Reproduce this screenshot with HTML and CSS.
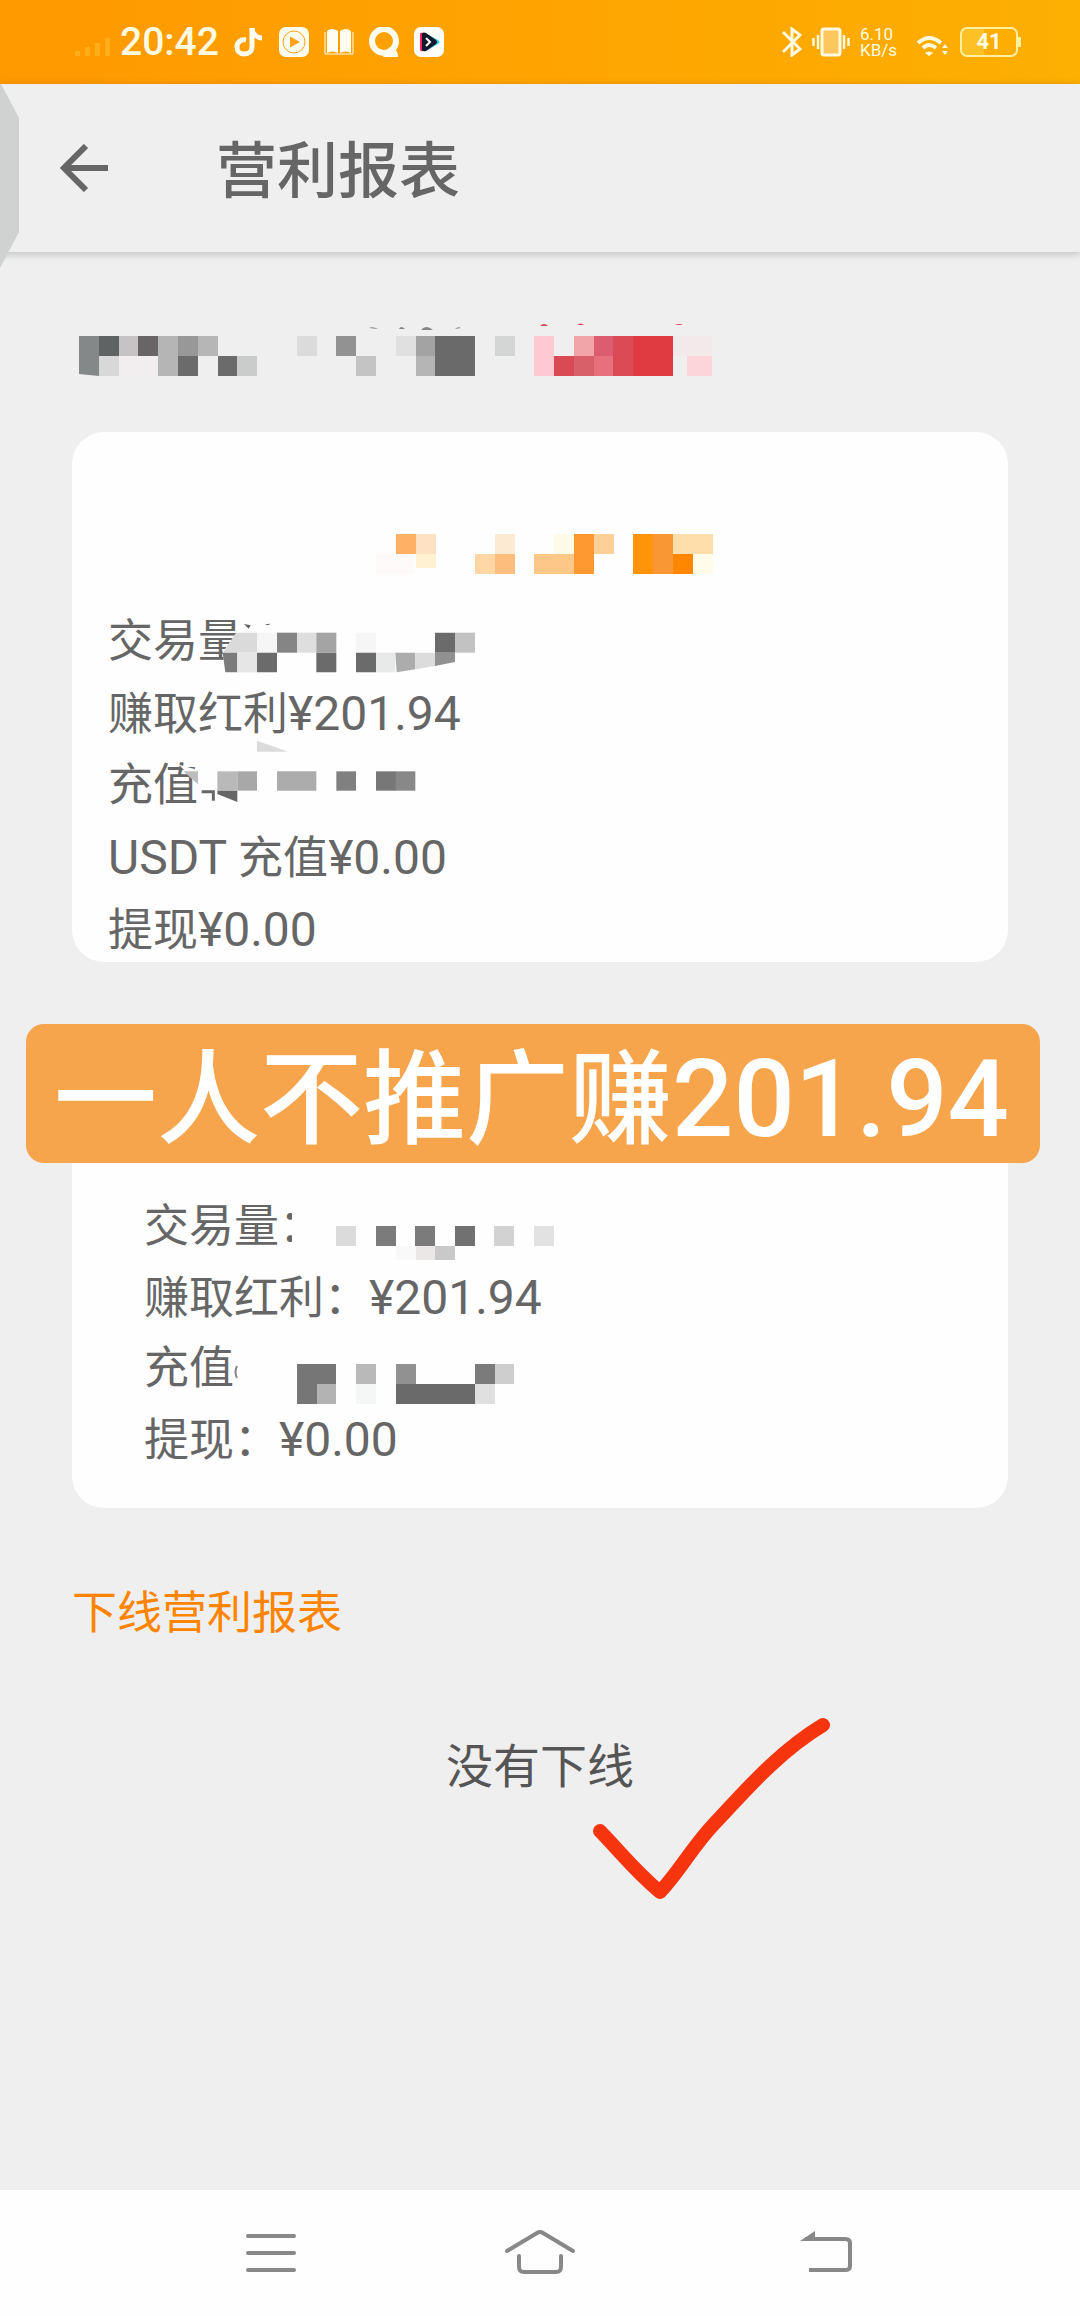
FILE: index.html
```html
<!DOCTYPE html>
<html lang="zh-CN">
<head>
  <meta charset="UTF-8">
  <meta name="viewport" content="width=device-width, initial-scale=1">
  <title>营利报表</title>
  <link rel="stylesheet" href="styles.css">
</head>
<body>

  <div class="status-bar">
    <div class="status-left">
      <svg class="signal" width="36" height="20" viewBox="0 0 36 20" fill="#ffad18">
        <rect x="0" y="13" width="5" height="5"/><rect x="10" y="9" width="5" height="9"/><rect x="20" y="5" width="5" height="13"/><rect x="30" y="0" width="5" height="18"/>
      </svg>
      <span class="time">20:42</span>
      <svg width="30" height="30" viewBox="0 0 30 30" fill="none" stroke="#fffdf0" stroke-width="5">
        <path d="M12 13C6 12 3 16 3 20C3 24 6 27 10 27C15 27 18 24 18 20V1"/><path d="M18 1C18 6 22 11 28 11"/>
      </svg>
      <svg width="30" height="30" viewBox="0 0 30 30">
        <rect width="30" height="30" rx="7" fill="#fffdf0"/><circle cx="15" cy="15" r="11" fill="none" stroke="#fda21c" stroke-width="1"/><path d="M11 9.500L21 15L11 20.500Z" fill="#fda21c"/>
      </svg>
      <svg width="30" height="30" viewBox="0 0 30 30" fill="#fffdf0">
        <path d="M3 4Q8 0 14 4V26Q8 23 3 26ZM16 4Q22 0 27 4V26Q22 23 16 26Z"/><path d="M1 5V27H29V5" fill="none" stroke="#fffdf0"/>
      </svg>
      <svg width="30" height="30" viewBox="0 0 30 30">
        <circle cx="15" cy="14" r="12" fill="none" stroke="#fffdf0" stroke-width="6"/><path d="M14 30C17 25 20 18 24 20C27 22 30 28 29 30Z" fill="#fffdf0"/>
      </svg>
      <svg width="30" height="30" viewBox="0 0 30 30">
        <rect width="30" height="30" rx="7" fill="#fffdf7"/><path d="M6 7Q6 5 9 6L14 9V22L9 24Q6 25 6 22Z" fill="#f5215f"/><path d="M11 6L24 13Q27 15 24 17L12 24Z" fill="#35d6dc"/><path d="M8 6Q10 5 12 6L22 13Q24 15 22 17L12 24Q9 25 8 23Z" fill="#15182c"/><path d="M12 11L16 15L12 19" fill="none" stroke="#fff" stroke-width="2"/>
      </svg>
    </div>
    <div class="status-right">
      <svg width="20" height="30" viewBox="0 0 20 30" fill="none" stroke="#fffbe0" stroke-width="3">
        <path d="M1 5L18 22L10 28V2L18 8L1 25"/>
      </svg>
      <svg width="38" height="30" viewBox="0 0 38 30">
        <rect x="10" y="2" width="18" height="26" rx="2" fill="#fdc75e" stroke="#fffbe0" stroke-width="3"/><path d="M6 8V22M1.500 11V19M32 8V22M36.500 11V19" stroke="#fffbe0" stroke-width="2.500"/>
      </svg>
      <div class="speed"><span>6.10</span><span>KB/s</span></div>
      <svg width="34" height="30" viewBox="0 0 34 30" fill="none" stroke="#fffbe0" stroke-width="4">
        <path d="M2 16Q13 6 25 16M7 21Q13 15 20 21"/><path d="M9 26Q13 23 17 26L13 29Z" fill="#fffbe0" stroke="none"/><path d="M26 21L29 17L32 21ZM26 24L29 28L32 24Z" fill="#fffbe0" stroke="none"/>
      </svg>
      <div class="battery">41</div>
    </div>
  </div>

  <header class="header">
    <svg class="edge" width="20" height="184" viewBox="0 0 20 184">
      <path d="M1 0L19 34V148L0 184V0Z" fill="#d0d1d1"/>
    </svg>
    <button class="back" aria-label="返回">
      <svg width="48" height="48" viewBox="0 0 48 48" fill="none" stroke="#666" stroke-width="6">
        <path d="M48 24H4M26 2L4 24L26 46"/>
      </svg>
    </button>
    <h1>营利报表</h1>
  </header>

  <main class="content">
    <svg class="account" width="520" height="60" viewBox="0 0 520 60">
      <path fill="#858888" d="M0 19H20V59L0 57Z"/>
      <path fill="#606363" d="M20 19h20v20h-20z"/><path fill="#c5c3c4" d="M40 19h20v20h-20z"/><path fill="#696465" d="M59 19h20v20h-20z"/>
      <path fill="#b6b5b6" d="M79 19h20v40h-20z"/><path fill="#989898" d="M99 19h20v20h-20z"/><path fill="#b6b6b6" d="M119 19h20v20h-20z"/>
      <path fill="#d9d8d9" d="M20 39h20v20h-20z"/><path fill="#f2eeef" d="M40 39h39v20h-39z"/><path fill="#6b6b6b" d="M99 39h20v20h-20zM139 39h20v20h-20z"/><path fill="#cacccc" d="M158 39h20v20h-20z"/>
      <path fill="#dadbda" d="M218 19h20v20h-20z"/><path fill="#929292" d="M257 19h20v20h-20z"/><path fill="#c4c4c4" d="M277 39h20v20h-20z"/>
      <path fill="#e0e0e0" d="M317 19h20v20h-20z"/><path fill="#a3a3a3" d="M337 19h20v20h-20z"/><path fill="#b5b5b5" d="M337 39h20v20h-20z"/><path fill="#6a6a6a" d="M356 19h40v40h-40z"/><path fill="#d4d6d5" d="M416 19h20v20h-20z"/>
      <path fill="#fec9d0" d="M455 19h20v40h-20z"/><path fill="#f1a5a8" d="M495 19h20v20h-20z"/><path fill="#d94a55" d="M475 39h20v20h-20z"/><path fill="#d86068" d="M495 39h20v20h-20z"/>
      <path fill="#dc5c70" d="M515 19h20v20h-20z"/><path fill="#e6707c" d="M515 39h20v20h-20z"/><path fill="#db4a55" d="M534 19h20v40h-20z"/><path fill="#e03b41" d="M554 19h40v40h-40z"/><path fill="#f2eaea" d="M594 19h39v20h-39z"/><path fill="#fbd5d9" d="M608 39h25v20h-25z"/>
      <path fill="#858585" d="M290 11q4-2 9 1zM320 12q2-4 6 0zM342 13q5-6 12 0zM376 12q3-3 6-1z"/>
      <path fill="#d8445d" d="M461 9q4-4 8 0zM498 8q4-3 7 0zM596 8q4-2 8 0z"/>
    </svg>

    <section class="card">
      <svg class="card-title" width="328" height="40" viewBox="0 0 328 40">
        <path fill="#fffafa" d="M0 20h38v20h-38z"/><path fill="#feb165" d="M20 0h20v20h-20z"/><path fill="#fee1c3" d="M40 0h20v20h-20z"/><path fill="#fff1d2" d="M40 20h20v14h-20z"/>
        <path fill="#fdead2" d="M119 0h20v20h-20z"/><path fill="#fed7a5" d="M99 20h20v20h-20z"/><path fill="#fdbd7c" d="M119 20h20v20h-20z"/>
        <path fill="#fffbe6" d="M178 0h20v20h-20z"/><path fill="#fdc887" d="M158 20h40v20h-40z"/><path fill="#fd9930" d="M198 0h20v40h-20z"/><path fill="#fecf96" d="M218 0h20v20h-20z"/>
        <path fill="#ff930a" d="M257 0h20v40h-20z"/><path fill="#fa9735" d="M277 0h20v40h-20z"/><path fill="#fedeab" d="M297 0h40v20h-40z"/><path fill="#ff8700" d="M297 20h20v20h-20z"/><path fill="#fffde9" d="M317 20h20v20h-20z"/>
      </svg>
      <div class="rows">
        <p>交易量</p>
        <p>赚取红利<span class="num">¥201.94</span></p>
        <p>充值</p>
        <p><span class="num">USDT </span>充值<span class="num">¥0.00</span></p>
        <p>提现<span class="num">¥0.00</span></p>
        <!-- hidden amounts -->
        <svg class="mask" width="400" height="216" viewBox="144 36 1200 648">
          <path fill="#fefefe" d="M532 130L488 186L496 248H640V110H532Z"/>
          <path fill="#dadada" d="M528 128H591V188H488Z"/><path fill="#f6f6f6" d="M591 128h60v60h-60zM888 128h60v60h-60z"/><path fill="#858585" d="M651 128h60v60h-60z"/><path fill="#dedede" d="M711 128h58v60h-58z"/><path fill="#a4a4a4" d="M769 128h60v60h-60z"/>
          <path fill="#7b7b7b" d="M488 188H532V247H496Z"/><path fill="#e6e6e6" d="M532 188h59v59h-59z"/><path fill="#6b6b6b" d="M591 188h60v59h-60zM769 188h60v59h-60zM888 188h60v59h-60zM1125 128h60v60h-60z"/>
          <path fill="#e8eae9" d="M948 188h58v59h-58z"/><path fill="#acacac" d="M1006 188H1066V238L1010 247Z"/><path fill="#dcdcdc" d="M1066 188H1125V228L1066 238Z"/><path fill="#919191" d="M1125 188H1185V216L1125 228Z"/><path fill="#c2c2c2" d="M1185 128h60v60h-60z"/>
          <path fill="#606060" d="M552 102L572 106L566 116ZM614 103L632 101L624 106Z"/>
          <path fill="#fefefe" d="M452 392H482L504 426H452Z"/>
          <path fill="#dbdbdb" d="M591 452L684 485H591Z"/>
          <path fill="#fefefe" d="M357 524L414 584V540Z"/><path fill="#bdbdbd" d="M370 544H414V583Z"/>
          <path d="M425 605H460V632" fill="none" stroke="#666" stroke-width="9"/>
          <path fill="#b9b9b9" d="M472 544h60v58h-60z"/><path fill="#a8a8a8" d="M532 544h59v58h-59z"/><path fill="#666" d="M472 602H532V636L472 612Z"/>
          <path fill="#acacac" d="M651 544h118v58h-118z"/><path fill="#808080" d="M829 544h59v58h-59z"/><path fill="#777" d="M948 544h60v58h-60z"/><path fill="#888" d="M1007 544h59v58h-59z"/>
        </svg>
      </div>
    </section>

    <section class="card self">
      <div class="banner">一人不推广赚<span>201.94</span></div>
      <div class="rows">
        <p>交易量：</p>
        <p>赚取红利：<span class="num">¥201.94</span></p>
        <p>充值</p>
        <p>提现：<span class="num">¥0.00</span></p>
        <svg class="mask" width="420" height="216" viewBox="0 0 420 216">
          <path fill="#fefefe" d="M148 16h20v40h-20z"/>
          <path fill="#dbdbdb" d="M192 36h20v20h-20z"/><path fill="#7b7b7b" d="M232 36h20v20h-20zM271 36h20v20h-20z"/><path fill="#717171" d="M311 36h20v20h-20z"/><path fill="#d2d2d2" d="M350 36h20v20h-20z"/><path fill="#e2e2e2" d="M390 36h20v20h-20z"/>
          <path fill="#f8f9f8" d="M252 56h20v14h-20z"/><path fill="#ebe7e7" d="M272 56h19v14h-19z"/><path fill="#c9c9c9" d="M291 56h20v14h-20z"/>
          <path d="M93 176Q90 182 93 188" fill="none" stroke="#888" stroke-width="2"/>
          <path fill="#767676" d="M153 174h39v20h-19v20h-20z"/><path fill="#b3b3b3" d="M173 194h19v20h-19z"/><path fill="#b9b9b9" d="M212 174h20v20h-20z"/><path fill="#f5f6f6" d="M212 194h20v20h-20z"/>
          <path fill="#919191" d="M252 174h20v20h-20z"/><path fill="#6a6a6a" d="M252 194h79v20h-79z"/><path fill="#7b7b7b" d="M331 174h20v20h-20z"/><path fill="#cecece" d="M351 174h19v20h-19z"/><path fill="#e0e0e0" d="M331 194h20v20h-20z"/>
        </svg>
      </div>
    </section>

    <h2>下线营利报表</h2>
    <div class="empty">
      没有下线
      <svg class="tick" width="240" height="190" viewBox="0 0 240 190" fill="none" stroke="#f6350f" stroke-width="14" stroke-linecap="round" stroke-linejoin="round">
        <path d="M10 117C34 142 44 156 70 178C90 157 102 133 124 110C150 83 185 40 233 11"/>
      </svg>
    </div>
  </main>

  <nav class="nav">
    <button aria-label="菜单">
      <svg width="72" height="48" viewBox="0 0 72 48" fill="none" stroke="#888" stroke-width="4" stroke-linecap="round">
        <path d="M13 7H59M13 24H59M13 41H59"/>
      </svg>
    </button>
    <button aria-label="主页">
      <svg width="72" height="48" viewBox="0 0 72 48" fill="none" stroke="#888" stroke-width="4" stroke-linecap="round">
        <path d="M3 22L33 4Q36 2 39 4L69 22M15 27V38Q15 43 20 43H52Q57 43 57 38V27"/>
      </svg>
    </button>
    <button aria-label="后退">
      <svg width="72" height="48" viewBox="0 0 72 48" fill="none" stroke="#888" stroke-width="4">
        <path d="M16 10H56Q61 10 61 14V37Q61 41 56 41H20"/><path d="M11 12L26 2V12Z" fill="#888" stroke="none"/>
      </svg>
    </button>
  </nav>

</body>
</html>
```
FILE: styles.css
```css
* {
  box-sizing: border-box;
}
body {
  margin: 0;
  min-height: 100vh;
  display: flex;
  flex-direction: column;
  background: #efefef;
  color: #666;
  font-family: Roboto, "Noto Sans CJK SC", sans-serif;
  font-size: 45px;
}
h1, h2, p {
  margin: 0;
  font-weight: normal;
}
button {
  padding: 0;
  border: none;
  background: none;
  cursor: pointer;
}
svg {
  display: block;
  flex-shrink: 0;
}

/* status bar */
.status-bar {
  height: 84px;
  padding: 0 62px 0 75px;
  display: flex;
  align-items: center;
  justify-content: space-between;
  background: linear-gradient(90deg, #ff9900, #fdaf02);
  color: #fffbe0;
}
.status-left {
  display: flex;
  align-items: center;
  gap: 15px;
}
.signal {
  margin: 12px -6px 0 0;
}
.time {
  font-size: 39px;
  line-height: 40px;
  font-weight: 500;
}
.status-right {
  display: flex;
  align-items: center;
  gap: 10px;
}
.speed {
  display: flex;
  flex-direction: column;
  width: 46px;
  font-size: 17px;
  line-height: 16px;
}
.battery {
  position: relative;
  width: 58px;
  height: 30px;
  border: 2px solid #fff0a0;
  border-radius: 7px;
  background: linear-gradient(90deg, #fdc125 41%, transparent 41%);
  font-size: 22px;
  line-height: 26px;
  font-weight: bold;
  text-align: center;
}
.battery::after {
  content: "";
  position: absolute;
  top: 8px;
  right: -5px;
  width: 3px;
  height: 10px;
  background: #fff0a0;
}

/* title bar */
.header {
  position: relative;
  height: 168px;
  padding: 0 60px;
  display: flex;
  align-items: center;
  gap: 108px;
  box-shadow: 0 2px 8px rgba(0, 0, 0, 0.2);
}
.header h1 {
  padding-top: 8px;
  font-size: 61px;
  line-height: 80px;
  font-weight: 500;
}
.edge {
  position: absolute;
  left: 0;
  top: 0;
}

.content {
  flex: 1;
  padding: 65px 72px;
}
.account {
  margin-left: 7px;
  overflow: visible;
}
.card {
  position: relative;
  height: auto;
  margin-top: 55px;
  padding: 102px 36px 0;
  background: #fefefe;
  border-radius: 32px;
}
.card-title {
  margin: 0 auto 28px;
  overflow: visible;
}
.rows {
  position: relative;
}
.rows p {
  height: 72px;
  padding-top: 4px;
  line-height: 72px;
}
.num {
  font-size: 48px;
}
.mask {
  position: absolute;
  left: 0;
  top: 0;
}
.self {
  margin-top: 108px;
  padding: 120px 72px 34px;
}
.self .rows p {
  height: 71px;
  padding-top: 1px;
  line-height: 71px;
}
.banner {
  position: absolute;
  top: -46px;
  left: -46px;
  right: -32px;
  height: 139px;
  padding: 6px 0 0 28px;
  background: #f7a54d;
  border-radius: 18px;
  color: #fff;
  font-size: 103px;
  line-height: 139px;
  font-weight: 500;
  white-space: nowrap;
}
.banner span {
  font-size: 108px;
}
h2 {
  margin-top: 73px;
  color: #ff8400;
  font-size: 45px;
  line-height: 66px;
}
.empty {
  position: relative;
  margin-top: 87px;
  color: #555;
  font-size: 47px;
  line-height: 66px;
  text-align: center;
}
.tick {
  position: absolute;
  left: 50%;
  top: -20px;
  margin-left: 50px;
}

/* system buttons */
.nav {
  height: 126px;
  padding: 0 125px;
  display: grid;
  grid-template-columns: repeat(3, 1fr);
  align-items: center;
  background: #fefefe;
}
.nav button {
  display: flex;
  justify-content: center;
}
.nav button:first-child {
  padding-left: 16px;
}
.nav button:last-child {
  padding-left: 16px;
}
```
